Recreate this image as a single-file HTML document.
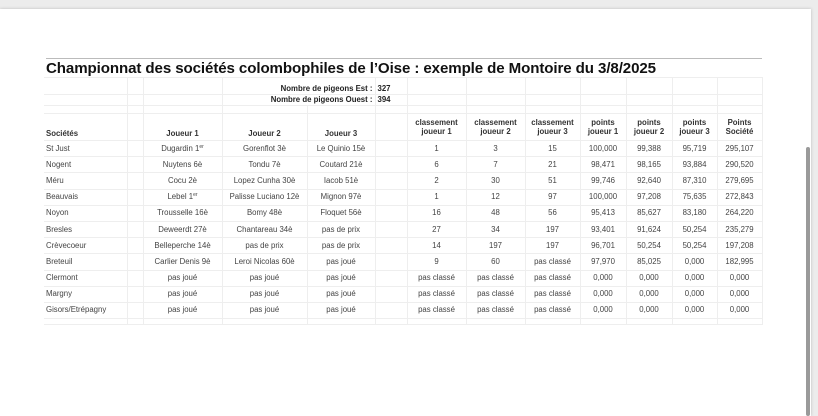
<!DOCTYPE html><html><head><meta charset="utf-8"><style>
body{margin:0;width:818px;height:416px;background:#ececec;overflow:hidden;font-family:"Liberation Sans",sans-serif;position:relative}
.page{position:absolute;left:0;top:9px;width:811px;height:407px;background:#fff;box-shadow:0 0 3px #bbb}
.sb{position:absolute;left:806px;top:147px;width:4px;height:269px;background:#9a9a9a;border-radius:2px}
.title{position:absolute;left:46px;top:58px;width:716px;border-top:1px solid #bbb;font-weight:bold;font-size:15.1px;color:#111;height:18px;line-height:20px;letter-spacing:-0.1px}
table{position:absolute;left:44px;top:77px;border-collapse:collapse;font-size:7.8px;color:#444;line-height:8px;table-layout:fixed;width:718px}
td{border:1px solid #eee;padding:0 2px;text-align:center;white-space:nowrap;overflow:hidden}
td:first-child{text-align:left;border-left:none}
tr{height:16.2px}
tr.h td{font-weight:bold;color:#333;line-height:9px}
.b{font-weight:bold;color:#222}
sup{font-size:5px;line-height:0;vertical-align:3px}
</style></head><body>
<div class="page"></div>
<div class="title">Championnat des sociétés colombophiles de l’Oise : exemple de Montoire du 3/8/2025</div>
<table>
<colgroup><col style="width:83px"><col style="width:16px"><col style="width:79px"><col style="width:85px"><col style="width:68px"><col style="width:32px"><col style="width:59px"><col style="width:59px"><col style="width:55px"><col style="width:46px"><col style="width:46px"><col style="width:45px"><col style="width:45px"></colgroup>
<tr style="height:17px"><td></td><td></td><td></td><td colspan="2" class="b" style="text-align:right;vertical-align:bottom;padding-bottom:1px">Nombre de pigeons Est :</td><td class="b" style="text-align:left;vertical-align:bottom;padding-bottom:1px">327</td><td></td><td></td><td></td><td></td><td></td><td></td><td></td></tr>
<tr style="height:11px"><td></td><td></td><td></td><td colspan="2" class="b" style="text-align:right">Nombre de pigeons Ouest :</td><td class="b" style="text-align:left">394</td><td></td><td></td><td></td><td></td><td></td><td></td><td></td></tr>
<tr style="height:8px"><td></td><td></td><td></td><td></td><td></td><td></td><td></td><td></td><td></td><td></td><td></td><td></td><td></td></tr>
<tr class="h" style="height:27px"><td style="vertical-align:bottom;padding-bottom:2px">Sociétés</td><td></td><td style="vertical-align:bottom;padding-bottom:2px">Joueur 1</td><td style="vertical-align:bottom;padding-bottom:2px">Joueur 2</td><td style="vertical-align:bottom;padding-bottom:2px">Joueur 3</td><td></td><td>classement<br>joueur 1</td><td>classement<br>joueur 2</td><td>classement<br>joueur 3</td><td>points<br>joueur 1</td><td>points<br>joueur 2</td><td>points<br>joueur 3</td><td>Points<br>Société</td></tr>
<tr><td>St Just</td><td></td><td>Dugardin 1<sup>er</sup></td><td>Gorenflot 3è</td><td>Le Quinio 15è</td><td></td><td>1</td><td>3</td><td>15</td><td>100,000</td><td>99,388</td><td>95,719</td><td>295,107</td></tr>
<tr><td>Nogent</td><td></td><td>Nuytens 6è</td><td>Tondu 7è</td><td>Coutard 21è</td><td></td><td>6</td><td>7</td><td>21</td><td>98,471</td><td>98,165</td><td>93,884</td><td>290,520</td></tr>
<tr><td>Méru</td><td></td><td>Cocu 2è</td><td>Lopez Cunha 30è</td><td>Iacob 51è</td><td></td><td>2</td><td>30</td><td>51</td><td>99,746</td><td>92,640</td><td>87,310</td><td>279,695</td></tr>
<tr><td>Beauvais</td><td></td><td>Lebel 1<sup>er</sup></td><td>Palisse Luciano 12è</td><td>Mignon 97è</td><td></td><td>1</td><td>12</td><td>97</td><td>100,000</td><td>97,208</td><td>75,635</td><td>272,843</td></tr>
<tr><td>Noyon</td><td></td><td>Trousselle 16è</td><td>Bomy 48è</td><td>Floquet 56è</td><td></td><td>16</td><td>48</td><td>56</td><td>95,413</td><td>85,627</td><td>83,180</td><td>264,220</td></tr>
<tr><td>Bresles</td><td></td><td>Deweerdt 27è</td><td>Chantareau 34è</td><td>pas de prix</td><td></td><td>27</td><td>34</td><td>197</td><td>93,401</td><td>91,624</td><td>50,254</td><td>235,279</td></tr>
<tr><td>Crèvecoeur</td><td></td><td>Belleperche 14è</td><td>pas de prix</td><td>pas de prix</td><td></td><td>14</td><td>197</td><td>197</td><td>96,701</td><td>50,254</td><td>50,254</td><td>197,208</td></tr>
<tr><td>Breteuil</td><td></td><td>Carlier Denis 9è</td><td>Leroi Nicolas 60è</td><td>pas joué</td><td></td><td>9</td><td>60</td><td>pas classé</td><td>97,970</td><td>85,025</td><td>0,000</td><td>182,995</td></tr>
<tr><td>Clermont</td><td></td><td>pas joué</td><td>pas joué</td><td>pas joué</td><td></td><td>pas classé</td><td>pas classé</td><td>pas classé</td><td>0,000</td><td>0,000</td><td>0,000</td><td>0,000</td></tr>
<tr><td>Margny</td><td></td><td>pas joué</td><td>pas joué</td><td>pas joué</td><td></td><td>pas classé</td><td>pas classé</td><td>pas classé</td><td>0,000</td><td>0,000</td><td>0,000</td><td>0,000</td></tr>
<tr><td>Gisors/Etrépagny</td><td></td><td>pas joué</td><td>pas joué</td><td>pas joué</td><td></td><td>pas classé</td><td>pas classé</td><td>pas classé</td><td>0,000</td><td>0,000</td><td>0,000</td><td>0,000</td></tr>
<tr style="height:6px"><td></td><td></td><td></td><td></td><td></td><td></td><td></td><td></td><td></td><td></td><td></td><td></td><td></td></tr>
</table>
<div class="sb"></div>
</body></html>
